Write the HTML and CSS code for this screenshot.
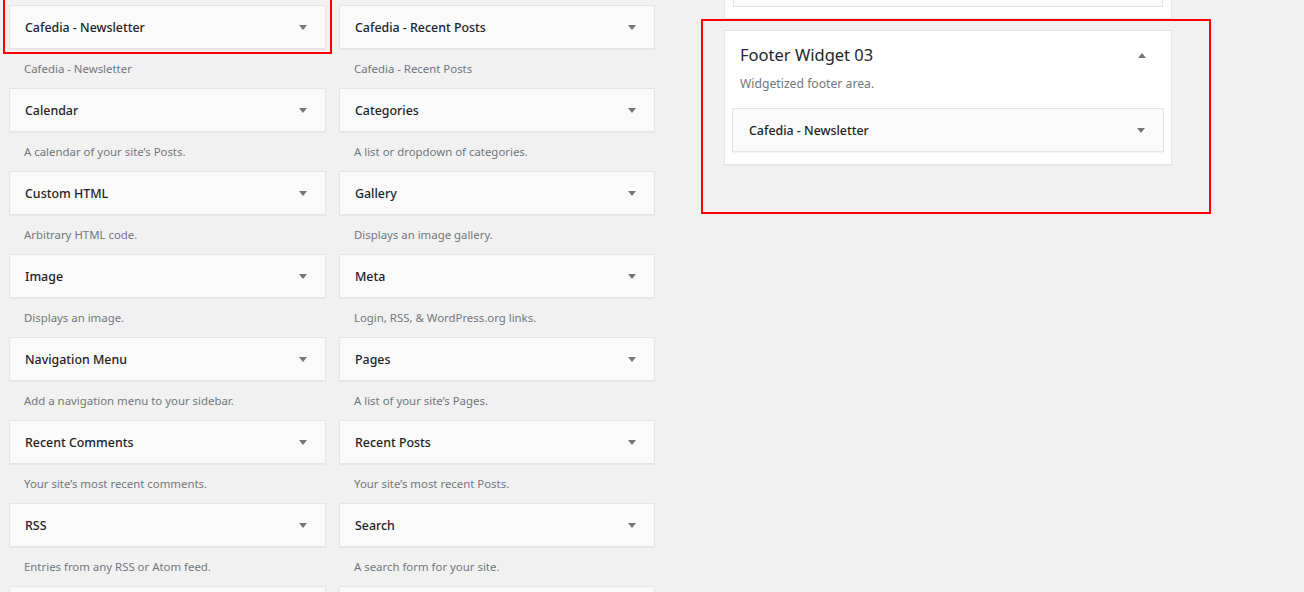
FILE: index.html
```html
<!DOCTYPE html>
<html lang="en">
<head>
<meta charset="utf-8">
<title>Widgets</title>
<link rel="stylesheet" href="styles.css">
</head>
<body>
<div class="page">
  <div class="available">
    <div class="widget-item">
      <div class="widget-top marked"><span class="wt-title">Cafedia - Newsletter</span><svg class="arrow" width="8" height="5" viewBox="0 0 8 5"><polygon points="0,0 8,0 4,5"/></svg></div>
      <div class="widget-desc">Cafedia - Newsletter</div>
    </div>
    <div class="widget-item">
      <div class="widget-top"><span class="wt-title">Cafedia - Recent Posts</span><svg class="arrow" width="8" height="5" viewBox="0 0 8 5"><polygon points="0,0 8,0 4,5"/></svg></div>
      <div class="widget-desc">Cafedia - Recent Posts</div>
    </div>
    <div class="widget-item">
      <div class="widget-top"><span class="wt-title">Calendar</span><svg class="arrow" width="8" height="5" viewBox="0 0 8 5"><polygon points="0,0 8,0 4,5"/></svg></div>
      <div class="widget-desc">A calendar of your site’s Posts.</div>
    </div>
    <div class="widget-item">
      <div class="widget-top"><span class="wt-title">Categories</span><svg class="arrow" width="8" height="5" viewBox="0 0 8 5"><polygon points="0,0 8,0 4,5"/></svg></div>
      <div class="widget-desc">A list or dropdown of categories.</div>
    </div>
    <div class="widget-item">
      <div class="widget-top"><span class="wt-title">Custom HTML</span><svg class="arrow" width="8" height="5" viewBox="0 0 8 5"><polygon points="0,0 8,0 4,5"/></svg></div>
      <div class="widget-desc">Arbitrary HTML code.</div>
    </div>
    <div class="widget-item">
      <div class="widget-top"><span class="wt-title">Gallery</span><svg class="arrow" width="8" height="5" viewBox="0 0 8 5"><polygon points="0,0 8,0 4,5"/></svg></div>
      <div class="widget-desc">Displays an image gallery.</div>
    </div>
    <div class="widget-item">
      <div class="widget-top"><span class="wt-title">Image</span><svg class="arrow" width="8" height="5" viewBox="0 0 8 5"><polygon points="0,0 8,0 4,5"/></svg></div>
      <div class="widget-desc">Displays an image.</div>
    </div>
    <div class="widget-item">
      <div class="widget-top"><span class="wt-title">Meta</span><svg class="arrow" width="8" height="5" viewBox="0 0 8 5"><polygon points="0,0 8,0 4,5"/></svg></div>
      <div class="widget-desc">Login, RSS, &amp; WordPress.org links.</div>
    </div>
    <div class="widget-item">
      <div class="widget-top"><span class="wt-title">Navigation Menu</span><svg class="arrow" width="8" height="5" viewBox="0 0 8 5"><polygon points="0,0 8,0 4,5"/></svg></div>
      <div class="widget-desc">Add a navigation menu to your sidebar.</div>
    </div>
    <div class="widget-item">
      <div class="widget-top"><span class="wt-title">Pages</span><svg class="arrow" width="8" height="5" viewBox="0 0 8 5"><polygon points="0,0 8,0 4,5"/></svg></div>
      <div class="widget-desc">A list of your site’s Pages.</div>
    </div>
    <div class="widget-item">
      <div class="widget-top"><span class="wt-title">Recent Comments</span><svg class="arrow" width="8" height="5" viewBox="0 0 8 5"><polygon points="0,0 8,0 4,5"/></svg></div>
      <div class="widget-desc">Your site’s most recent comments.</div>
    </div>
    <div class="widget-item">
      <div class="widget-top"><span class="wt-title">Recent Posts</span><svg class="arrow" width="8" height="5" viewBox="0 0 8 5"><polygon points="0,0 8,0 4,5"/></svg></div>
      <div class="widget-desc">Your site’s most recent Posts.</div>
    </div>
    <div class="widget-item">
      <div class="widget-top"><span class="wt-title">RSS</span><svg class="arrow" width="8" height="5" viewBox="0 0 8 5"><polygon points="0,0 8,0 4,5"/></svg></div>
      <div class="widget-desc">Entries from any RSS or Atom feed.</div>
    </div>
    <div class="widget-item">
      <div class="widget-top"><span class="wt-title">Search</span><svg class="arrow" width="8" height="5" viewBox="0 0 8 5"><polygon points="0,0 8,0 4,5"/></svg></div>
      <div class="widget-desc">A search form for your site.</div>
    </div>
    <div class="widget-item">
      <div class="widget-top"></div>
    </div>
    <div class="widget-item">
      <div class="widget-top"></div>
    </div>
  </div>

  <div class="sidebars">
    <div class="prev-holder">
      <div class="prev-widget"></div>
    </div>
    <div class="highlight">
      <div class="holder">
        <div class="holder-head">
          <h2 class="holder-title">Footer Widget 03</h2>
          <svg class="arrow" width="8" height="5" viewBox="0 0 8 5"><polygon points="4,0 8,5 0,5"/></svg>
        </div>
        <p class="holder-desc">Widgetized footer area.</p>
        <div class="widget-top inner"><span class="wt-title">Cafedia - Newsletter</span><svg class="arrow" width="8" height="5" viewBox="0 0 8 5"><polygon points="0,0 8,0 4,5"/></svg></div>
      </div>
    </div>
  </div>
</div>
</body>
</html>
```

FILE: styles.css
```css
html, body {
  margin: 0;
  padding: 0;
}
body {
  background: #f1f1f1;
  font-family: "Segoe UI", "Noto Sans", "Open Sans", sans-serif;
  font-size: 13px;
  color: #23282d;
  overflow: hidden;
  height: 592px;
}
.page {
  display: flex;
  align-items: flex-start;
}
.available {
  display: grid;
  grid-template-columns: 317px 316px;
  column-gap: 13px;
  padding: 5px 0 0 9px;
}
.widget-item {
  height: 83px;
}
.widget-top {
  position: relative;
  box-sizing: border-box;
  height: 44px;
  background: #fafafa;
  border: 1px solid #e5e5e5;
  box-shadow: 0 1px 1px rgba(0, 0, 0, 0.04);
  display: flex;
  align-items: center;
  justify-content: space-between;
  padding: 0 18px 0 15px;
}
.widget-top.marked::after {
  content: "";
  position: absolute;
  left: -7px;
  right: -7px;
  top: -8px;
  bottom: -6px;
  border: 2px solid #ff0000;
  pointer-events: none;
}
.wt-title {
  font-size: 12.4px;
  font-weight: 500;
  color: #1d2327;
}
.arrow {
  display: block;
  fill: #72777c;
}
.widget-desc {
  padding: 11px 0 0 15px;
  line-height: 18px;
  font-size: 11.4px;
  color: #72777c;
}
.sidebars {
  margin-left: 46px;
  display: flex;
  flex-direction: column;
}
.prev-holder {
  box-sizing: border-box;
  margin-left: 23px;
  width: 448px;
  height: 19px;
  background: #fff;
  border: 1px solid #e5e5e5;
  border-top: none;
  box-shadow: 0 1px 1px rgba(0, 0, 0, 0.04);
  padding: 0 8px;
}
.prev-widget {
  box-sizing: border-box;
  height: 7px;
  background: #fafafa;
  border: 1px solid #e5e5e5;
  border-top: none;
}
.highlight {
  border: 2px solid #ff0000;
  padding: 9px 37px 47px 21px;
  width: 448px;
}
.holder {
  box-sizing: border-box;
  width: 448px;
  background: #fff;
  border: 1px solid #e5e5e5;
  box-shadow: 0 1px 1px rgba(0, 0, 0, 0.04);
  padding: 12px 7px 12px 7px;
}
.holder-head {
  display: flex;
  align-items: center;
  justify-content: space-between;
  padding: 0 18px 0 8px;
}
.holder-title {
  margin: 0;
  font-size: 16.5px;
  font-weight: 400;
  line-height: 24px;
  color: #23282d;
}
.holder-desc {
  margin: 8px 0 0 8px;
  line-height: 18px;
  font-size: 12.2px;
  color: #72777c;
}
.widget-top.inner {
  margin-top: 15px;
  padding: 0 18px 0 16px;
}
```
